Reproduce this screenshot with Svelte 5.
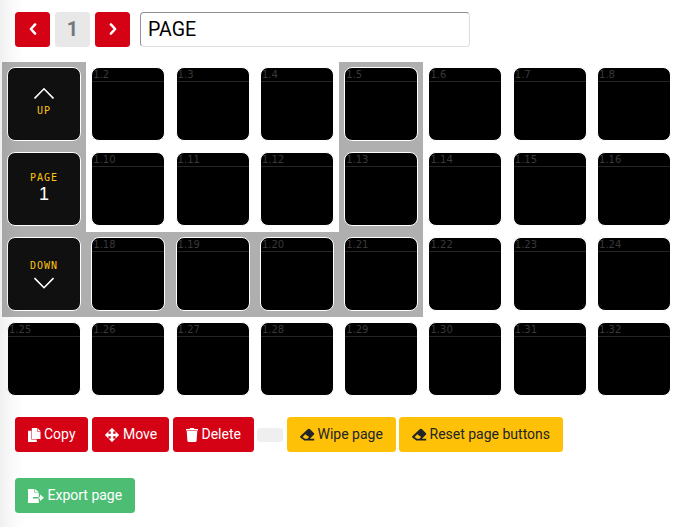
<script>
  const names = {
    left: 'M6.1 1.4 1.9 6l4.2 4.6', right: 'M1.9 1.4 6.1 6l-4.2 4.6'
  };
  const tiles = Array.from({ length: 32 }, (_, i) => {
    const row = Math.floor(i / 8), col = i % 8;
    return {
      label: `1.${i + 1}`,
      kind: col === 0 ? ['up', 'page', 'down', ''][row] : '',
      shaded: row < 3 && (col === 0 || col === 4 || (row === 2 && col < 4))
    };
  });
</script>

<main>
  <header>
    <button class="btn red nav" aria-label="Previous"><svg width="8" height="12" viewBox="0 0 8 12"><path class="chev" d={names.left} /></svg></button>
    <button class="btn num">1</button>
    <button class="btn red nav" aria-label="Next"><svg width="8" height="12" viewBox="0 0 8 12"><path class="chev" d={names.right} /></svg></button>
    <input value="PAGE" aria-label="Page name" />
  </header>

  <section class="grid">
    {#each tiles as t}
      <div class="cell" class:shaded={t.shaded}>
        <div class="tile {t.kind}">
          {#if t.kind === 'up'}
            <svg width="20" height="12" viewBox="0 0 20 12"><path class="arrow" d="M.5 11.5 10 1.8 19.5 11.5" /></svg>
            <span class="name">UP</span>
          {:else if t.kind === 'page'}
            <span class="name">PAGE</span>
            <span class="one">1</span>
          {:else if t.kind === 'down'}
            <span class="name">DOWN</span>
            <svg width="20" height="12" viewBox="0 0 20 12"><path class="arrow" d="M.5 1 10 10.7 19.5 1" /></svg>
          {:else}
            <div class="label">{t.label}</div>
          {/if}
        </div>
      </div>
    {/each}
  </section>

  <div class="actions">
    <button class="btn red copy">
      <svg width="13" height="14" viewBox="0 0 13 14"><path d="M3.8 0H9v3.5h3.5v7.4H3.8zM9.5 0l3 3h-3zM0 2.8h3.3v8.6h5.5V14H0z" /></svg><span>Copy</span>
    </button>
    <button class="btn red move">
      <svg width="14" height="14" viewBox="0 0 14 14"><path d="M7 0l3.2 3.3H8.1v2.6h2.6V3.8L14 7l-3.3 3.2V8.1H8.1v2.6h2.1L7 14l-3.2-3.3h2.1V8.1H3.3v2.1L0 7l3.3-3.2v2.1h2.6V3.3H3.8z" stroke="currentColor" stroke-width=".3" /></svg><span>Move</span>
    </button>
    <button class="btn red delete">
      <svg width="12" height="14" viewBox="0 0 12 14"><path d="M0 .9h3.6L4.2 0h3.6l.6.9H12v1.5H0zM.7 3.1h10.6l-.7 9.7c0 .7-.5 1.2-1.2 1.2H2.6c-.7 0-1.2-.5-1.2-1.2z" /></svg><span>Delete</span>
    </button>
    <button class="blank" aria-label="Empty"></button>
    <button class="btn yellow wipe">
      <svg width="15" height="14" viewBox="0 0 15 14"><path fill-rule="evenodd" d="M.5 8.1 8 1.1q.9-.8 1.8 0l4 3.9q.9.9 0 1.8L9.9 10.7h4.3v1.8H4.4L.5 9.7q-.8-.8 0-1.6zM5.3 6.3 2.6 9l2.3 1.7h2.5L9.1 9z" /></svg><span>Wipe page</span>
    </button>
    <button class="btn yellow reset">
      <svg width="15" height="14" viewBox="0 0 15 14"><path fill-rule="evenodd" d="M.5 8.1 8 1.1q.9-.8 1.8 0l4 3.9q.9.9 0 1.8L9.9 10.7h4.3v1.8H4.4L.5 9.7q-.8-.8 0-1.6zM5.3 6.3 2.6 9l2.3 1.7h2.5L9.1 9z" /></svg><span>Reset page buttons</span>
    </button>
  </div>

  <div class="export">
    <button class="btn green">
      <svg width="16" height="14" viewBox="0 0 16 14"><path d="M0 0h6.4v3.8h4.4v4.1H5v1.5h5.8V14H0zM7.1 0l3.7 3.2H7.1zM10.8 7.9H12V5.4l4 3.3-4 3.2V9.4h-1.2z" /></svg><span>Export page</span>
    </button>
  </div>
  <div class="edge"></div>
</main>

<style>
  :global(body) { margin: 0; background: #fff; }
  main {
    position: relative; box-sizing: border-box; width: 680px; height: 527px;
    overflow: hidden; padding-top: 12px; background: #fff;
    font-family: Roboto, sans-serif; font-size: 14px; line-height: 21px;
  }
  button { font: inherit; border: 0; margin: 0; padding: 0; }
  svg { display: block; flex: none; fill: currentColor; }
  header { display: flex; padding-left: 15px; gap: 5px; height: 35px; }
  .btn {
    box-sizing: border-box; height: 35px; display: flex; align-items: center;
    padding: 0 0 0 13px; border-radius: 3.5px; white-space: nowrap;
  }
  .red { background: #d50215; color: #fff; }
  .yellow { background: #ffc107; color: #212529; }
  .green { background: #4dbd74; color: #fff; width: 120px; gap: 4px; }
  .green svg { margin-right: -.5px; }
  .nav, .num { width: 35px; padding: 0 0 1px; justify-content: center; }
  .num { background: #e8e8e8; color: #74787c; font-weight: 700; font-size: 20px; }
  .chev { fill: none; stroke: #fff; stroke-width: 2.5; stroke-linecap: round; stroke-linejoin: round; }
  input {
    box-sizing: border-box; width: 330px; height: 35px; margin: 0 0 0 5px; padding: 0 7px;
    border: 1px solid #dedede; border-top-color: #929292; border-left-color: #929292;
    border-radius: 4px; background: #fff; color: #000; font: 19.6px Roboto, sans-serif; outline: 0;
  }
  .grid {
    display: grid; grid-template-columns: repeat(8, 84.3px); grid-auto-rows: 85px;
    margin: 15px 0 0 2px; width: 674.4px;
  }
  .cell { padding: 5px; box-sizing: border-box; }
  .shaded { background: #afafaf; }
  .tile {
    box-sizing: border-box; width: 74px; height: 74px; border: 1px solid #fff;
    border-radius: 8px; background: #000; overflow: hidden;
    display: flex; flex-direction: column; align-items: center;
  }
  .label {
    box-sizing: border-box; width: 100%; height: 14px; border-bottom: 1px solid #242424;
    padding-left: 1px; color: #393939; font: 10px/14px "DejaVu Sans", sans-serif;
  }
  .up, .page, .down { background: #101010; }
  .arrow { fill: none; stroke: #fff; stroke-width: 1.6; }
  .name { color: #ffc414; font: 10px/10px "DejaVu Sans Mono", monospace; letter-spacing: 1px; }
  .one { color: #fff; font: 18px/18px "Liberation Sans", sans-serif; }
  .up { padding-top: 19px; }
  .up .name { margin-top: 7px; }
  .page { padding-top: 20px; }
  .page .one { margin-top: 2px; }
  .down { padding-top: 23px; }
  .down svg { margin-top: 6px; }
  .actions { display: flex; padding: 15px 0 0 15px; height: 35px; }
  .copy { width: 73px; margin-right: 4px; gap: 3px; }
  .move { width: 77px; margin-right: 4px; gap: 4px; }
  .delete { width: 81px; margin-right: 3px; gap: 3.5px; }
  .blank { width: 26px; height: 14px; margin: 11px 4px 0 0; border-radius: 3px; background: #efefef; }
  .wipe { width: 109px; margin-right: 3px; gap: 2.5px; }
  .reset { width: 164px; gap: 2.5px; }
  .export { padding: 26px 0 0 15px; }
  .edge {
    position: absolute; top: 0; left: 0; bottom: 0; width: 26px; pointer-events: none;
    background: linear-gradient(90deg, rgba(0,0,0,.06), rgba(0,0,0,.02) 50%, transparent);
  }
</style>
